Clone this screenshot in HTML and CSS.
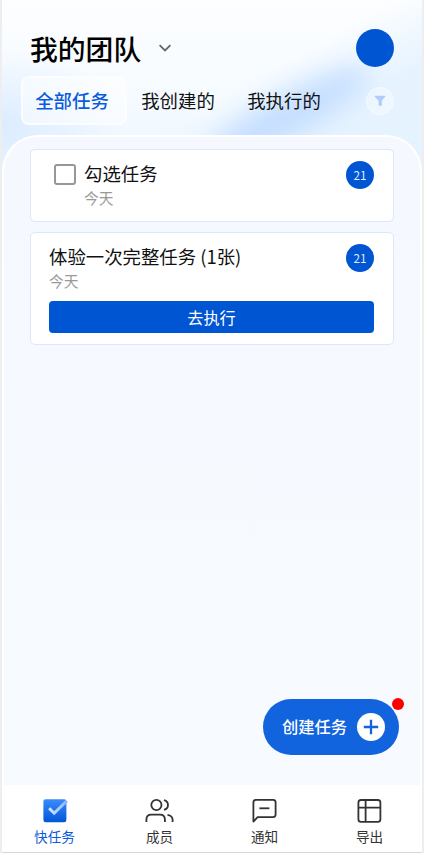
FILE: index.html
```html
<!DOCTYPE html>
<html lang="zh-CN">
<head>
<meta charset="utf-8">
<title>我的团队</title>
<link rel="stylesheet" href="styles.css">
</head>
<body>
<div class="app">
  <header class="header">
    <div class="title-row">
      <h1 class="title">我的团队</h1>
      <svg class="chevron" width="14" height="10" viewBox="0 0 14 10" fill="none" stroke="#666" stroke-width="1.8"><path d="M1.6 2.2 7 7.4l5.4-5.2"/></svg>
      <div class="avatar"></div>
    </div>
    <nav class="tabs">
      <a class="tab tab-active">全部任务</a>
      <a class="tab">我创建的</a>
      <a class="tab">我执行的</a>
      <button class="filter" aria-label="筛选"><svg width="12" height="12" viewBox="0 0 12 12" fill="#afccfb"><path d="M1.2.8h9.6c.6 0 .8.6.4 1L7.8 5.7v5.1H4.6V5.7L.8 1.8C.4 1.4.6.8 1.2.8z"/></svg></button>
    </nav>
  </header>
  <main class="panel">
    <article class="card card-check">
      <span class="checkbox"></span>
      <div class="info"><h2 class="task">勾选任务</h2><p class="date">今天</p></div>
      <span class="badge">21</span>
    </article>
    <article class="card">
      <div class="card-row">
        <div class="info"><h2 class="task">体验一次完整任务 (1张)</h2><p class="date">今天</p></div>
        <span class="badge">21</span>
      </div>
      <button class="run">去执行</button>
    </article>
  </main>
  <button class="create"><span>创建任务</span>
    <svg width="28" height="28" viewBox="0 0 28 28"><circle cx="14" cy="14" r="14" fill="#fff"/><path d="M14 6.8v14.4M6.8 14h14.4" stroke="#1164de" stroke-width="2.3"/></svg>
    <i class="dot"></i>
  </button>
  <nav class="bottom">
    <a class="item item-active">
      <svg width="28" height="28" viewBox="0 0 28 28" fill="none"><defs><linearGradient id="box" x2="0" y2="1"><stop stop-color="#3b8bfb"/><stop offset="1" stop-color="#0156d8"/></linearGradient><linearGradient id="tick" x1="0" x2="1"><stop stop-color="#d5e5ff"/><stop offset="1" stop-color="#86b4fb"/></linearGradient></defs><rect x="2.4" y="3.2" width="23" height="23" rx="2.3" fill="url(#box)"/><path d="m8.2 12.2 5 5L25.8 4.9" stroke="url(#tick)" stroke-width="3"/></svg>
      <span>快任务</span>
    </a>
    <a class="item">
      <svg class="wide" width="28" height="28" viewBox="0 0 28 28" fill="none" stroke="#333" stroke-width="1.8"><g transform="translate(-.5 .8)"><circle cx="10.9" cy="8.2" r="5.1"/><path d="M.9 25.3v-2.5q0-5 5-5h8.5q5 0 5 5v2.5M18.5 3.4c2.4.6 4 2.5 4 4.8s-1.6 4.2-4 4.8M22 18c3.3.5 5.1 2 5.1 5v2.3"/></g></svg>
      <span>成员</span>
    </a>
    <a class="item">
      <svg width="28" height="28" viewBox="0 0 28 28" fill="none" stroke="#333" stroke-width="1.8"><g transform="translate(-.8 .8)"><path d="M3.2 24.8V5.5q0-2.5 2.5-2.5h17.2q2.5 0 2.5 2.5v12.3q0 2.5-2.5 2.5H7.4z" stroke-linejoin="round"/><path d="M9.2 11.5h10"/></g></svg>
      <span>通知</span>
    </a>
    <a class="item">
      <svg width="28" height="28" viewBox="0 0 28 28" fill="none" stroke="#333" stroke-width="1.8"><g transform="translate(-1 .9)"><rect x="3.4" y="3.1" width="22" height="21.8" rx="2.6"/><path d="M3.4 10.7h22M10.6 3.1v21.8"/></g></svg>
      <span>导出</span>
    </a>
  </nav>
</div>
</body>
</html>
```
FILE: styles.css
```css
* { box-sizing: border-box; margin: 0; padding: 0; }
body {
  height: 853px;
  padding: 0 2px;
  background: #eeeef0;
  font-family: "Noto Sans CJK SC", sans-serif;
  color: #111;
  overflow: hidden;
}
button { border: 0; font: inherit; }
.app {
  position: relative;
  display: flex;
  flex-direction: column;
  width: 420px;
  height: 853px;
  border-bottom: 1px solid #d6d6d8;
  background: #f7faff;
}
.header {
  position: relative;
  height: 175px;
  margin-bottom: -40px;
  padding-top: 28px;
  overflow: hidden;
  background:
    radial-gradient(ellipse 120px 80px at 0 125px, rgba(205, 228, 255, .6), transparent),
    linear-gradient(150deg, transparent 54%, rgba(226, 241, 255, .8) 74%, rgba(226, 242, 255, .75)),
    linear-gradient(#fdfeff, #f6fbff 50%, #edf6ff);
}
/* soft diagonal light beam behind the tabs */
.header::before {
  content: "";
  position: absolute;
  left: 190px;
  top: 95px;
  width: 190px;
  height: 42px;
  border-radius: 50%;
  background: rgba(184, 215, 255, .75);
  filter: blur(13px);
  transform: rotate(-29deg);
}
.title-row, .tabs { position: relative; }
.title-row { display: flex; align-items: center; height: 40px; padding: 0 28px; }
.title { font-size: 27.8px; line-height: 40px; font-weight: 500; color: #000; }
.chevron { margin: 0 auto 0 17px; }
.avatar { width: 38px; height: 38px; border-radius: 50%; background: #0055d3; }
.tabs { display: flex; align-items: center; height: 49px; margin-top: 8px; padding: 0 28px 0 19px; }
.tab { width: 106px; height: 49px; padding-right: 4px; line-height: 49px; font-size: 18.4px; text-align: center; }
.tab-active {
  border: 2px solid #fbfdff;
  border-radius: 8px;
  background: rgba(255, 255, 255, .5);
  color: #0b5bdc;
  line-height: 45px;
  font-weight: 500;
}
.filter {
  display: flex;
  align-items: center;
  justify-content: center;
  width: 28px;
  height: 28px;
  margin-left: auto;
  border: 1px solid #f8fbff;
  border-radius: 50%;
  background: rgba(255, 255, 255, .35);
}
.panel {
  position: relative;
  flex: 1;
  display: flex;
  flex-direction: column;
  gap: 10px;
  padding: 12px 26px 0;
  border: 2px solid #fff;
  border-bottom: 0;
  border-radius: 36px 36px 0 0;
  background: linear-gradient(#f5f9ff, #f7faff);
}
.card { padding: 11px 19px 11px 18px; border: 1px solid #d9e8fd; border-radius: 5px; background: #fff; }
.card-check { display: flex; height: 73px; padding-left: 23px; }
.card-row { display: flex; height: 57px; }
.checkbox { width: 22px; height: 21px; margin: 3px 8px 0 0; border: 2px solid #979797; border-radius: 3px; }
.info { flex: 1; margin-top: -1px; }
.task { font-size: 18.4px; line-height: 27px; font-weight: 400; }
.date { font-size: 14.7px; line-height: 22px; color: #999; }
.badge {
  width: 28px;
  height: 28px;
  border-radius: 50%;
  background: #0055d3;
  color: #dfeaff;
  font-size: 11.8px;
  line-height: 27px;
  text-align: center;
}
.run { display: block; width: 100%; height: 32px; border-radius: 4px; background: #0055d3; color: #fff; font-size: 16.2px; line-height: 31px; }
.create {
  position: absolute;
  right: 23px;
  bottom: 97px;
  display: flex;
  align-items: center;
  justify-content: space-between;
  width: 136px;
  height: 56px;
  padding: 0 14px 0 19px;
  border-radius: 29px;
  background: #1164de;
  color: #fff;
  font-size: 16.3px;
  font-weight: 500;
}
.create span { margin-top: -2px; }
.dot { position: absolute; top: -1px; right: -5px; width: 12px; height: 12px; border-radius: 50%; background: #f00; }
.bottom { display: flex; height: 67px; background: #fff; }
.item { flex: 1; display: flex; flex-direction: column; align-items: center; padding-top: 11px; font-size: 13.6px; line-height: 20px; color: #333; }
.item span { margin-top: 2px; }
.wide { overflow: visible; }
.item-active { color: #0b5bdc; }
```
